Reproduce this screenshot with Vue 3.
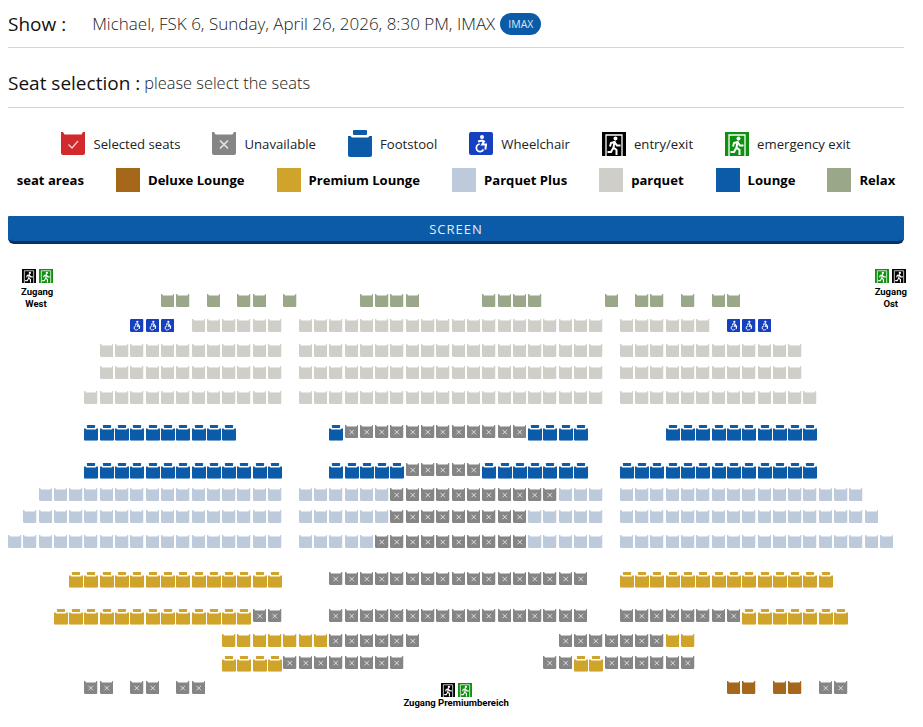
<script setup>
import { computed } from 'vue'

const legend = [
  { icon: 'seat', color: 'selected', label: 'Selected seats' },
  { icon: 'seat-x', color: 'gray', label: 'Unavailable' },
  { icon: 'stool', color: 'lounge', label: 'Footstool', tall: true },
  { icon: 'wheel', color: 'wheel', label: 'Wheelchair' },
  { icon: 'exit', color: 'black', label: 'entry/exit', exit: true },
  { icon: 'exit', color: 'green', label: 'emergency exit', exit: true }
]

const areas = [
  { color: 'deluxe', label: 'Deluxe Lounge' },
  { color: 'premium', label: 'Premium Lounge' },
  { color: 'plus', label: 'Parquet Plus' },
  { color: 'parquet', label: 'parquet' },
  { color: 'lounge', label: 'Lounge' },
  { color: 'relax', label: 'Relax' }
]

const trackHeights = [25, 25, 25, 22, 25, 34, 38, 25, 22, 25, 37, 37, 25, 22, 25, 30]

// each block: first column, last column, colour, seat shape
const rows = [
  [[10, 11, 'relax'], [13, 13, 'relax'], [15, 16, 'relax'], [18, 18, 'relax'], [23, 26, 'relax'], [31, 34, 'relax'], [39, 39, 'relax'], [41, 42, 'relax'], [44, 44, 'relax'], [46, 47, 'relax']],
  [[8, 10, 'wheel', 'wheel'], [12, 17, 'parquet'], [19, 38, 'parquet'], [40, 45, 'parquet'], [47, 49, 'wheel', 'wheel']],
  [[6, 17, 'parquet'], [19, 38, 'parquet'], [40, 51, 'parquet']],
  [[6, 17, 'parquet'], [19, 38, 'parquet'], [40, 51, 'parquet']],
  [[5, 17, 'parquet'], [19, 38, 'parquet'], [40, 52, 'parquet']],
  [[5, 14, 'lounge', 'stool'], [21, 21, 'lounge', 'stool'], [22, 33, 'gray', 'seat-x'], [34, 37, 'lounge', 'stool'], [43, 52, 'lounge', 'stool']],
  [[5, 17, 'lounge', 'stool'], [21, 25, 'lounge', 'stool'], [26, 30, 'gray', 'seat-x'], [31, 37, 'lounge', 'stool'], [40, 52, 'lounge', 'stool']],
  [[2, 17, 'plus'], [19, 24, 'plus'], [25, 35, 'gray', 'seat-x'], [36, 38, 'plus'], [40, 55, 'plus']],
  [[1, 17, 'plus'], [19, 24, 'plus'], [25, 33, 'gray', 'seat-x'], [34, 38, 'plus'], [40, 56, 'plus']],
  [[0, 17, 'plus'], [19, 23, 'plus'], [24, 33, 'gray', 'seat-x'], [34, 38, 'plus'], [40, 57, 'plus']],
  [[4, 17, 'premium', 'stool'], [21, 37, 'gray', 'seat-x'], [40, 53, 'premium', 'stool']],
  [[3, 15, 'premium', 'stool'], [16, 17, 'gray', 'seat-x'], [21, 37, 'gray', 'seat-x'], [40, 47, 'gray', 'seat-x'], [48, 54, 'premium', 'stool']],
  [[14, 20, 'premium'], [21, 26, 'gray', 'seat-x'], [36, 42, 'gray', 'seat-x'], [43, 44, 'premium']],
  [[14, 17, 'premium', 'stool'], [18, 25, 'gray', 'seat-x'], [35, 36, 'gray', 'seat-x'], [37, 38, 'premium', 'stool'], [39, 44, 'gray', 'seat-x']],
  [[5, 6, 'gray', 'seat-x'], [8, 9, 'gray', 'seat-x'], [11, 12, 'gray', 'seat-x'], [47, 48, 'deluxe'], [50, 51, 'deluxe'], [53, 54, 'gray', 'seat-x']]
]

const seats = computed(() => {
  const list = []
  rows.forEach((blocks, r) => {
    blocks.forEach(([from, to, color, shape = 'seat']) => {
      for (let c = from; c <= to; c++) {
        list.push({ id: `${r}-${c}`, row: r + 2, col: c + 1, color, shape })
      }
    })
  })
  return list
})
</script>

<template>
  <div class="page">
    <svg class="defs" aria-hidden="true">
      <symbol id="seat" viewBox="0 0 24 23">
        <path d="M0 0h2L3.500 2.500h17L22 0h2v21a2 2 0 0 1-2 2H2a2 2 0 0 1-2-2z" fill="currentColor" />
      </symbol>
      <symbol id="seat-check" viewBox="0 0 24 23">
        <path d="M0 0h2L3.500 2.500h17L22 0h2v21a2 2 0 0 1-2 2H2a2 2 0 0 1-2-2z" fill="currentColor" />
        <path d="M7.500 12.500l3.500 3.500 6-7" fill="none" stroke="#f3d6d6" stroke-width="1.200" />
      </symbol>
      <symbol id="seat-x" viewBox="0 0 24 23">
        <path d="M0 0h2L3.500 2.500h17L22 0h2v21a2 2 0 0 1-2 2H2a2 2 0 0 1-2-2z" fill="currentColor" />
        <path d="M8 8.500l8 8M16 8.500l-8 8" stroke="#e6e6e6" stroke-width="1.600" />
      </symbol>
      <symbol id="stool" viewBox="0 0 24 27">
        <rect x="5" width="14" height="5" rx="1" fill="currentColor" />
        <path d="M0 6h2.500L4 7.500h16L21.500 6H24v19a2 2 0 0 1-2 2H2a2 2 0 0 1-2-2z" fill="currentColor" />
      </symbol>
      <symbol id="wheel" viewBox="0 0 24 23">
        <rect width="24" height="23" rx="2" fill="currentColor" />
        <circle cx="13" cy="5" r="2" fill="#fff" />
        <path d="M9 9.500l4-1 2 1-1.800 3H17l-.6 5" fill="none" stroke="#fff" stroke-width="2" />
        <path d="M10.800 12a3.800 3.800 0 1 0 3.700 5.500" fill="none" stroke="#fff" stroke-width="1.700" />
      </symbol>
      <symbol id="exit" viewBox="0 0 24 24">
        <rect width="24" height="24" fill="currentColor" />
        <path d="M4 24V3h16v21" fill="none" stroke="#fff" stroke-width="1.300" />
        <circle cx="13.500" cy="6.500" r="2" fill="#fff" />
        <path d="M5.500 20h3.500l2.500-4.500 3 2.500v5M11.500 15.500l1-5.500-3.500 1-1 3.500M12.500 10l2.500 3.500h3.500" fill="none" stroke="#fff" stroke-width="2" />
      </symbol>
    </svg>

    <header class="headline">
      <h2 class="headlineTitle">Show :</h2>
      <span class="showInfo">Michael, FSK 6, Sunday, April 26, 2026, 8:30 PM, IMAX</span>
      <span class="badge">IMAX</span>
    </header>

    <header class="headline headlineSeats">
      <h2 class="headlineTitle">Seat selection :</h2>
      <span class="hint">please select the seats</span>
    </header>

    <div class="legend">
      <div v-for="item in legend" :key="item.label" class="legendItem">
        <svg
          class="legendIcon"
          :class="[`c-${item.color}`, { legendIconTall: item.tall, legendIconExit: item.exit }]"
        >
          <use :href="item.color === 'selected' ? '#seat-check' : `#${item.icon}`" />
        </svg>
        <span>{{ item.label }}</span>
      </div>
    </div>

    <div class="legend legendAreas">
      <strong class="legendItem">seat areas</strong>
      <div v-for="area in areas" :key="area.label" class="legendItem">
        <span class="swatch" :class="`b-${area.color}`"></span>
        <strong>{{ area.label }}</strong>
      </div>
    </div>

    <div class="screen">SCREEN</div>

    <div class="map" :style="{ gridTemplateRows: trackHeights.map((h) => h + 'px').join(' ') }">
      <div class="entrance entranceWest">
        <div class="entranceIcons">
          <svg class="exitSmall c-black"><use href="#exit" /></svg>
          <svg class="exitSmall c-green"><use href="#exit" /></svg>
        </div>
        <div>Zugang</div>
        <div>West&nbsp;</div>
      </div>

      <div class="entrance entranceEast">
        <div class="entranceIcons">
          <svg class="exitSmall c-green"><use href="#exit" /></svg>
          <svg class="exitSmall c-black"><use href="#exit" /></svg>
        </div>
        <div>Zugang</div>
        <div>Ost</div>
      </div>

      <div class="entrance entrancePremium">
        <div class="entranceIcons">
          <svg class="exitSmall c-black"><use href="#exit" /></svg>
          <svg class="exitSmall c-green"><use href="#exit" /></svg>
        </div>
        <div>Zugang Premiumbereich</div>
      </div>

      <svg
        v-for="seat in seats"
        :key="seat.id"
        class="seat"
        :class="[`c-${seat.color}`, { seatStool: seat.shape === 'stool' }]"
        :style="{ gridRow: seat.row, gridColumn: seat.col }"
      >
        <use :href="`#${seat.shape}`" />
      </svg>
    </div>
  </div>
</template>

<style>
html,
body {
  background: #fff;
}
</style>

<style scoped>
.page {
  width: 896px;
  padding-left: 8px;
  color: #1f1f1f;
  font-family: "Open Sans", "Noto Sans", sans-serif;
}

.defs {
  position: absolute;
  width: 0;
  height: 0;
}

.headline {
  display: flex;
  align-items: center;
  box-sizing: content-box;
  height: 47px;
  border-bottom: 1px solid #d6d6d6;
}

.headlineSeats {
  height: 49px;
  padding-top: 10px;
}

.headlineTitle {
  margin: 0;
  font-size: 19px;
  font-weight: 400;
  color: #111;
  white-space: nowrap;
}

.showInfo {
  margin-left: 26px;
  font-size: 17px;
  font-weight: 300;
  color: #222;
}

.badge {
  margin-left: 5px;
  padding: 4px 8px;
  border-radius: 11px;
  background: #0c5ba8;
  color: #dfe8f2;
  font-size: 10.500px;
  line-height: 14px;
}

.hint {
  margin-left: 4px;
  font-size: 16.400px;
  font-weight: 300;
  color: #222;
}

.legend {
  display: flex;
  justify-content: center;
  align-items: center;
  gap: 32px;
  margin-top: 22px;
  font-size: 13.150px;
}

.legendAreas {
  margin-top: 11px;
  font-size: 13.100px;
}

.legendItem {
  display: flex;
  align-items: center;
  gap: 8px;
  white-space: nowrap;
  color: #222;
}

.legendAreas .legendItem,
.legendAreas strong {
  color: #000;
}

.legendIcon {
  width: 24px;
  height: 23px;
}

.legendIconTall {
  height: 27px;
}

.legendIconExit {
  height: 24px;
}

.swatch {
  width: 24px;
  height: 24px;
}

.screen {
  margin-top: 24px;
  height: 25px;
  border-radius: 1px 1px 6px 6px;
  border-bottom: 3px solid #05335f;
  background: #0c5ba8;
  color: #e6edf5;
  font-size: 13px;
  letter-spacing: 1px;
  line-height: 26px;
  text-align: center;
}

.map {
  display: grid;
  grid-template-columns: repeat(58, 15.3px) 20px;
  margin-top: 25px;
}

.seat {
  width: 13.5px;
  height: 13px;
}

.seatStool {
  width: 14px;
  height: 15.750px;
}

.entrance {
  color: #000;
  font-family: Roboto, sans-serif;
  font-size: 9.500px;
  font-weight: 700;
  line-height: 12px;
  text-align: center;
  white-space: nowrap;
  justify-self: start;
}

.entranceWest {
  grid-column: 1 / 6;
  grid-row: 1 / span 3;
  margin-left: 13px;
}

.entranceEast {
  grid-column: 57 / 60;
  grid-row: 1 / span 3;
  margin-left: 10px;
}

.entrancePremium {
  grid-column: 26 / 36;
  grid-row: 16;
  margin-top: 2px;
  margin-left: 13px;
}

.entranceIcons {
  display: flex;
  justify-content: center;
  gap: 3px;
  height: 17px;
}

.entrancePremium .entranceIcons {
  height: 14px;
}

.exitSmall {
  width: 14px;
  height: 14px;
}

.c-selected { color: #d22a2c; }
.c-gray { color: #858585; }
.c-lounge { color: #0c5ba8; }
.c-wheel { color: #1541c0; }
.c-black { color: #000; }
.c-green { color: #0f9010; }
.c-relax { color: #9aa789; }
.c-parquet { color: #cfcec9; }
.c-plus { color: #bccadb; }
.c-premium { color: #d0a32b; }
.c-deluxe { color: #a5671a; }

.b-deluxe { background: #a5671a; }
.b-premium { background: #d0a32b; }
.b-plus { background: #bccadb; }
.b-parquet { background: #cfcec9; }
.b-lounge { background: #0c5ba8; }
.b-relax { background: #9aa789; }
</style>
